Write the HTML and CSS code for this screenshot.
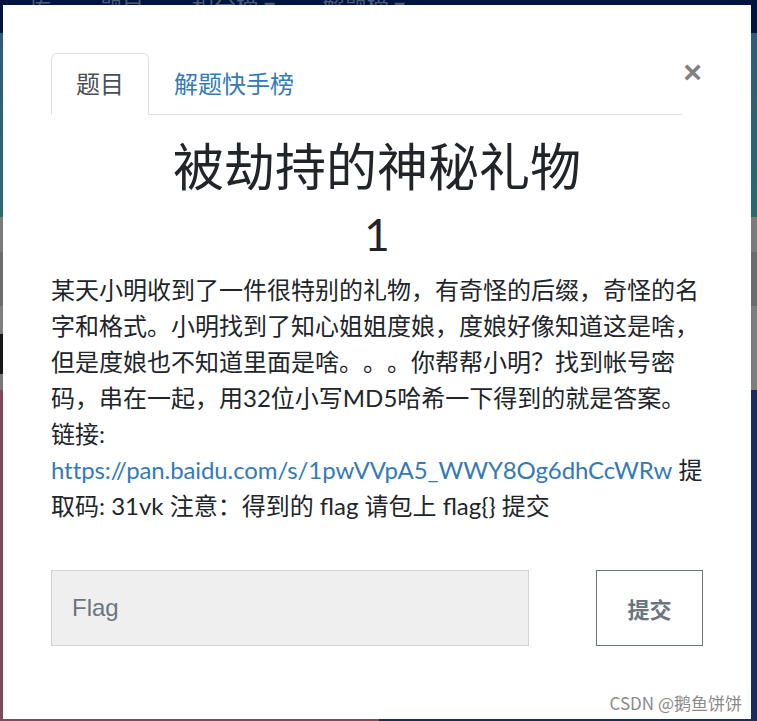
FILE: index.html
```html
<!DOCTYPE html>
<html>

<head>
  <meta charset="utf-8" />
  <meta name="viewport" content="width=device-width, initial-scale=1" />
  <title>被劫持的神秘礼物</title>
  <link rel="stylesheet" href="styles.css">
</head>

<body>
  <div class="page">
    <div class="topbar">
      <span>库</span>
      <span>题目</span>
      <span>积分榜 ▾</span>
      <span>解题榜 ▾</span>
    </div>
    <div class="hero"></div>
    <div class="strip strip-a"></div>
    <div class="strip strip-b"></div>
    <div class="cards">
      <div class="card-left">
        <div class="cl-1"></div>
        <div class="cl-2"></div>
        <div class="cl-3"></div>
        <div class="cl-4"></div>
      </div>
      <div class="card-right">
        <div class="cr-1"></div>
        <div class="cr-2"></div>
      </div>
    </div>
  </div>

  <div class="modal">
    <div class="modal-header">
      <ul class="tabs">
        <li class="tab active">题目</li>
        <li class="tab">解题快手榜</li>
      </ul>
      <button class="close">&times;</button>
    </div>

    <h1 class="title">被劫持的神秘礼物</h1>
    <h2 class="score">1</h2>

    <p class="desc">
      某天小明收到了一件很特别的礼物，有奇怪的后缀，奇怪的名字和格式。小明找到了知心姐姐度娘，度娘好像知道这是啥，但是度娘也不知道里面是啥。。。你帮帮小明？找到帐号密码，串在一起，用32位小写MD5哈希一下得到的就是答案。 链接: <a href="#">https://pan.baidu.com/s/1pwVVpA5_WWY8Og6dhCcWRw</a> 提取码: 31vk 注意：得到的 flag 请包上 flag{} 提交
    </p>

    <div class="flag-form">
      <input type="text" placeholder="Flag" />
      <button class="submit">提交</button>
    </div>

    <div class="watermark">CSDN @鹅鱼饼饼</div>
  </div>
</body>

</html>
```

FILE: styles.css
```css
body {
  margin: 0;
  padding: 0;
  overflow: hidden;
  background-color: #1e2a5c;
  font-family: Lato, "Noto Sans CJK SC", sans-serif;
  color: #212529;
  text-spacing-trim: space-all;
}

/* dimmed page behind the dialog */
.page {
  height: 721px;
}

.topbar {
  height: 33px;
  background: #01143f;
  display: flex;
  gap: 48px;
  padding-left: 30px;
  font-size: 22px;
  line-height: 12px;
  color: #4f5a78;
  overflow: hidden;
}

.hero {
  height: 184px;
  background: linear-gradient(#2f5c78, #2b6a6c);
}

.strip-a {
  height: 35px;
  background: #7b7b7b;
}

.strip-b {
  height: 54px;
  background: #6c6c6c;
}

.cards {
  display: flex;
  height: 415px;
}

.card-left,
.card-right {
  flex: 1;
  display: flex;
  flex-direction: column;
}

.cl-1 {
  height: 28px;
  background: #7f7f7f;
}

.cl-2 {
  height: 40px;
  background: #161616;
}

.cl-3 {
  height: 16px;
  background: #787878;
}

.cl-4 {
  flex: 1;
  background: #7b4c5d;
}

.cr-1 {
  height: 84px;
  background: #7e7e7e;
}

.cr-2 {
  flex: 1;
  background: #1f2a5c;
}

/* dialog */
.modal {
  position: fixed;
  top: 5px;
  left: 3px;
  width: 748px;
  height: 714px;
  box-sizing: border-box;
  padding: 48px 48px 0;
  background: #ffffff;
}

.modal-header {
  display: flex;
  align-items: flex-start;
}

.tabs {
  flex: 1;
  display: flex;
  margin: 0;
  padding: 0;
  list-style: none;
  border-bottom: 1px solid #dee2e6;
}

.tab {
  margin-bottom: -1px;
  padding: 12px 24px;
  font-size: 24px;
  line-height: 36px;
  color: #337ab7;
  border: 1px solid transparent;
  border-radius: 6px 6px 0 0;
}

.tab.active {
  color: #495057;
  background: #ffffff;
  border-color: #dee2e6 #dee2e6 #ffffff;
}

.close {
  width: 21px;
  height: 32px;
  margin-top: 3px;
  padding: 0;
  border: none;
  background: none;
  font-family: "Liberation Sans", Arial, sans-serif;
  font-size: 32px;
  font-weight: bold;
  line-height: 32px;
  color: #808080;
}

.title {
  margin: 22px 0 0;
  font-size: 51px;
  font-weight: normal;
  line-height: 60px;
  text-align: center;
}

.score {
  margin: 11px 0 0;
  font-size: 44px;
  font-weight: normal;
  line-height: 52px;
  text-align: center;
}

.desc {
  margin: 12px 0 0;
  font-size: 24px;
  line-height: 36px;
}

.desc a {
  color: #337ab7;
  text-decoration: none;
  letter-spacing: -0.1px;
}

.flag-form {
  display: flex;
  justify-content: space-between;
  margin-top: 46px;
}

.flag-form input {
  width: 478px;
  height: 76px;
  box-sizing: border-box;
  padding: 0 20px;
  border: 1px solid #ced4da;
  background: #efefef;
  font-family: "Liberation Sans", Arial, sans-serif;
  font-size: 24px;
  color: #495057;
}

.flag-form input::placeholder {
  color: #6c757d;
}

.submit {
  width: 107px;
  height: 76px;
  border: 1px solid #6c757d;
  background: #ffffff;
  font-family: Lato, "Noto Sans CJK SC", sans-serif;
  font-size: 22px;
  font-weight: bold;
  color: #6c757d;
}

.watermark {
  position: absolute;
  right: 9px;
  bottom: 4px;
  font-family: "Noto Sans CJK SC", sans-serif;
  font-size: 17px;
  line-height: 24px;
  color: #8a8a8a;
}
```
